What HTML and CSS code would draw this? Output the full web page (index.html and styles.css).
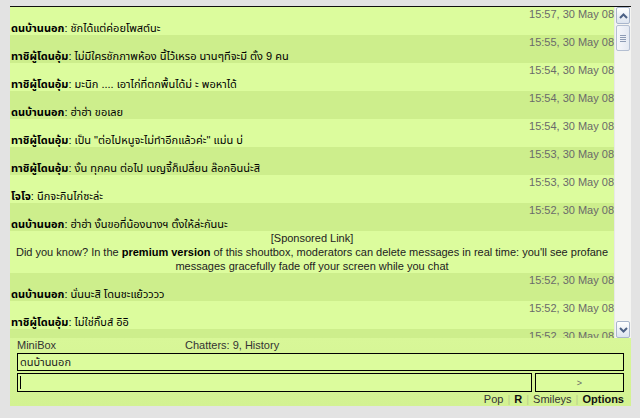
FILE: index.html
```html
<!DOCTYPE html>
<html lang="th">
<head>
  <meta charset="UTF-8">
  <title>MiniBox</title>
  <link rel="stylesheet" href="styles.css">
</head>
<body>
  <div class="shoutbox">
    <div class="viewport">
      <div class="messages">
        <div class="msg light">
          <div class="time">15:57, 30 May 08</div>
          <div class="line"><b>ดนบ้านนอก</b>: ชักได้แต่ค่อยโพสต์นะ</div>
        </div>
        <div class="msg dark">
          <div class="time">15:55, 30 May 08</div>
          <div class="line"><b>ทาชิผู้โดนอุ้ม</b>: ไม่มีใครชักภาพห้อง นี้ไว้เหรอ นานๆทีจะมี ตั้ง 9 คน</div>
        </div>
        <div class="msg light">
          <div class="time">15:54, 30 May 08</div>
          <div class="line"><b>ทาชิผู้โดนอุ้ม</b>: มะนิก .... เอาไก่ที่ตกพื้นได้ม่ ะ พอหาได้</div>
        </div>
        <div class="msg dark">
          <div class="time">15:54, 30 May 08</div>
          <div class="line"><b>ดนบ้านนอก</b>: ฮ่าฮ่า ขอเลย</div>
        </div>
        <div class="msg light">
          <div class="time">15:54, 30 May 08</div>
          <div class="line"><b>ทาชิผู้โดนอุ้ม</b>: เป็น "ต่อไปหนูจะไม่ทำอีกแล้วค่ะ" แม่น บ่</div>
        </div>
        <div class="msg dark">
          <div class="time">15:53, 30 May 08</div>
          <div class="line"><b>ทาชิผู้โดนอุ้ม</b>: งั้น ทุกคน ต่อไป เบญจี้ก็เปลี่ยน ล๊อกอินน่ะสิ</div>
        </div>
        <div class="msg light">
          <div class="time">15:53, 30 May 08</div>
          <div class="line"><b>โจโจ</b>: นึกจะกินไก่ซะล่ะ</div>
        </div>
        <div class="msg dark">
          <div class="time">15:52, 30 May 08</div>
          <div class="line"><b>ดนบ้านนอก</b>: ฮ่าฮ่า งั้นขอที่น้องนางฯ ตั้งให้ล่ะกันนะ</div>
        </div>
        <div class="sponsor light">
          <div>[Sponsored Link]</div>
          <div>Did you know? In the <b>premium version</b> of this shoutbox, moderators can delete messages in real time: you'll see profane messages gracefully fade off your screen while you chat</div>
        </div>
        <div class="msg dark">
          <div class="time">15:52, 30 May 08</div>
          <div class="line"><b>ดนบ้านนอก</b>: นั่นนะสิ โดนชะแย้วววว</div>
        </div>
        <div class="msg light">
          <div class="time">15:52, 30 May 08</div>
          <div class="line"><b>ทาชิผู้โดนอุ้ม</b>: ไม่ใช่กิ๊บส์ อิอิ</div>
        </div>
        <div class="msg dark">
          <div class="time">15:52, 30 May 08</div>
          <div class="line"><b>ดนบ้านนอก</b>: ...</div>
        </div>
      </div>
      <div class="scrollbar">
        <div class="sb-btn">
          <svg width="9" height="6" viewBox="0 0 9 6"><path d="M1 5 L4.5 1.5 L8 5" fill="none" stroke="#4d6185" stroke-width="2"/></svg>
        </div>
        <div class="sb-thumb"><span></span><span></span><span></span><span></span></div>
        <div class="sb-track"></div>
        <div class="sb-btn">
          <svg width="9" height="6" viewBox="0 0 9 6"><path d="M1 1 L4.5 4.5 L8 1" fill="none" stroke="#4d6185" stroke-width="2"/></svg>
        </div>
      </div>
    </div>
    <div class="panel">
      <div class="panel-head">
        <span class="title">MiniBox</span>
        <span>Chatters: 9, History</span>
      </div>
      <input class="field name" type="text" value="ดนบ้านนอก">
      <div class="send-row">
        <div class="msg-field">
          <input class="field" type="text" value="">
          <span class="caret"></span>
        </div>
        <button class="send">&gt;</button>
      </div>
      <div class="links">
        <a href="#">Pop</a><span class="sep">|</span><a href="#" class="strong">R</a><span class="sep">|</span><a href="#">Smileys</a><span class="sep">|</span><a href="#" class="strong">Options</a>
      </div>
    </div>
  </div>
</body>
</html>
```

FILE: styles.css
```css
/* page colours */
html {
  --row-light: #dcfc9d;
  --row-dark: #cdee8c;
}

body {
  margin: 0;
  background: #e3e3e3;
  font-family: "Liberation Sans", Arial, "Noto Sans Thai", "Noto Sans", sans-serif;
  font-size: 11px;
}

.shoutbox {
  margin: 6px 0 0 10px;
  width: 621px;
  border-top: 1px solid #111;
}

/* message list + fake scrollbar */
.viewport {
  display: flex;
  height: 331px;
}

.messages {
  width: 605px;
  overflow: hidden;
}

.light { background: var(--row-light); }
.dark { background: var(--row-dark); }

.msg {
  height: 28px;
}

.time {
  text-align: right;
  color: #6a6a6a;
  line-height: 14px;
  height: 14px;
}

.line {
  line-height: 14px;
  height: 14px;
  padding-left: 1px;
  color: #000;
  white-space: nowrap;
}

.sponsor {
  height: 42px;
  text-align: center;
  color: #222;
  line-height: 14px;
}

.sponsor b {
  color: #000;
}

.scrollbar {
  width: 16px;
  display: flex;
  flex-direction: column;
  background: #f4f4f2;
  border-left: 1px solid #e8e8e8;
}

.sb-btn {
  height: 15px;
  margin: 0 1px;
  border: 1px solid #a9b6cc;
  border-radius: 2px;
  background: linear-gradient(#ffffff, #dde4ef);
  display: flex;
  align-items: center;
  justify-content: center;
  flex: none;
}

.sb-thumb {
  height: 24px;
  margin: 1px 1px 0;
  border: 1px solid #b4bfd2;
  border-radius: 2px;
  background: linear-gradient(90deg, #f6f7fb, #e4e9f2);
  display: flex;
  flex-direction: column;
  align-items: center;
  justify-content: center;
  gap: 1px;
  flex: none;
}

.sb-thumb span {
  width: 6px;
  height: 1px;
  background: #8e9cb5;
}

.sb-track {
  flex: 1;
}

/* lower input panel */
.panel {
  background: linear-gradient(#d8f798, #d3f292);
  padding: 0 7px;
  color: #333;
}

.panel-head {
  display: flex;
  line-height: 14px;
  height: 14px;
}

.panel-head .title {
  width: 168px;
}

.field {
  box-sizing: border-box;
  display: block;
  width: 100%;
  height: 18px;
  margin: 0;
  padding: 0 2px;
  border: 1px solid #000;
  background: var(--row-light);
  font-family: "Liberation Sans", Arial, "Noto Sans Thai", "Noto Sans", sans-serif;
  font-size: 11px;
  color: #222;
  outline: none;
}

.name {
  margin-top: 1px;
}

.send-row {
  display: flex;
  gap: 3px;
  margin-top: 2px;
}

.msg-field {
  position: relative;
  width: 515px;
}

.msg-field .field {
  height: 19px;
}

.caret {
  position: absolute;
  left: 3px;
  top: 3px;
  width: 1px;
  height: 13px;
  background: #000;
}

.send {
  flex: 1;
  height: 19px;
  border: 1px solid #000;
  background: var(--row-light);
  color: #666;
  font-size: 9px;
  padding: 0;
}

.links {
  text-align: right;
  line-height: 14px;
  height: 14px;
}

.links a {
  color: #333;
  text-decoration: none;
}

.links .strong {
  font-weight: bold;
  color: #111;
}

.sep {
  color: #b9cf8c;
  margin: 0 4px;
}
```
